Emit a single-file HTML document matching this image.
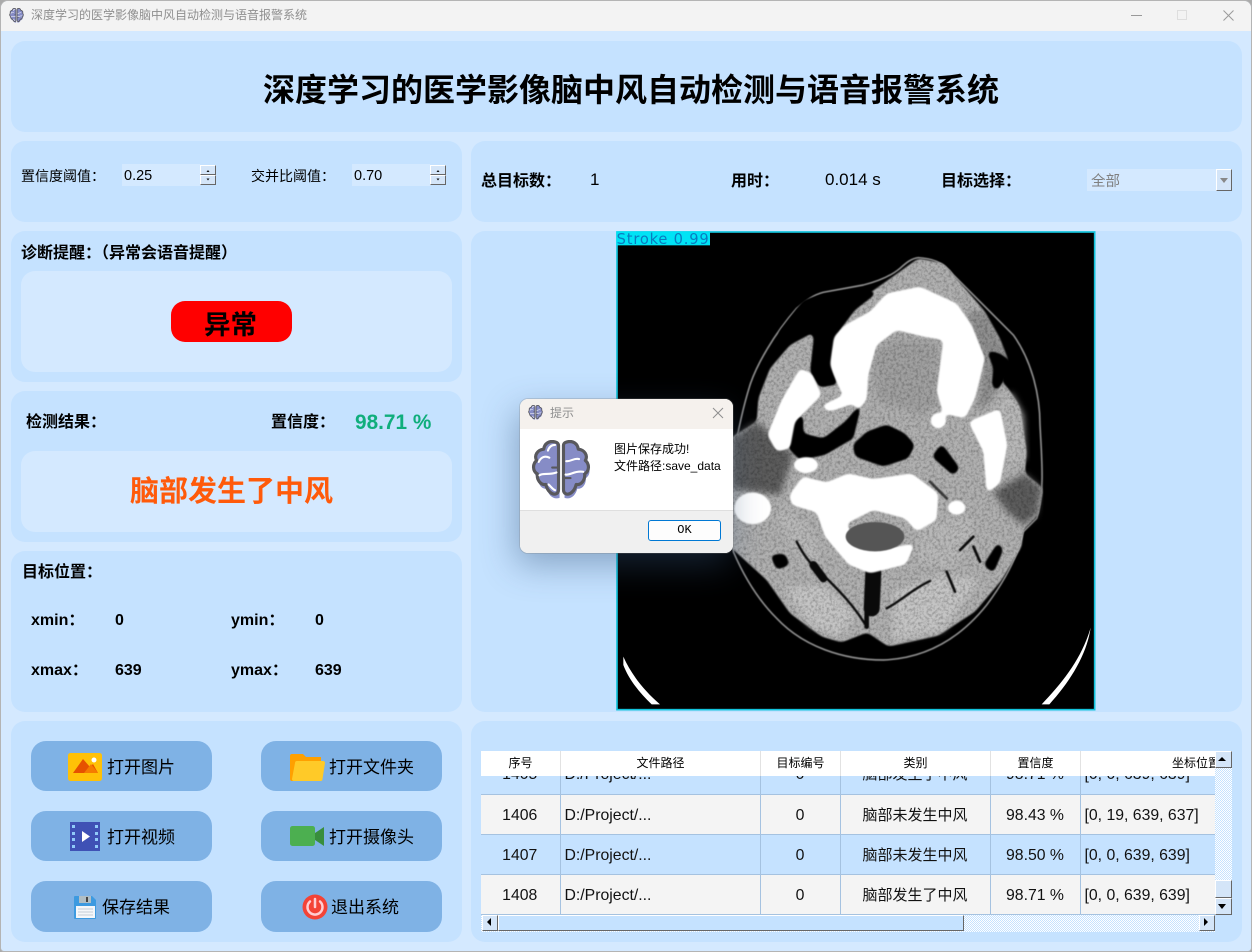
<!DOCTYPE html>
<html lang="zh"><head><meta charset="utf-8"><title>深度学习的医学影像脑中风自动检测与语音报警系统</title>
<style>
*{box-sizing:border-box;margin:0;padding:0}
html,body{width:1252px;height:952px;overflow:hidden;background:#aaa}
body{position:relative;font-family:"Liberation Sans","Noto Sans CJK SC",sans-serif;color:#000}
#win{position:absolute;left:0;top:0;width:1252px;height:952px;background:#d4e9ff;border:1px solid #b4b4b4;border-radius:8px 8px 4px 4px;overflow:hidden}
#bar{position:absolute;left:0;top:0;width:1252px;height:31px;background:#f3f3f3}
.a{position:absolute}
.p{position:absolute;background:#c5e2ff;border-radius:14px}
.i{position:absolute;background:#d4e9ff;border-radius:14px}
.t{position:absolute;white-space:nowrap;line-height:24px;height:24px}
.b{font-weight:700}
.s16{font-size:16px}
.s17{font-size:17px}
.btn{position:absolute;width:181px;background:#7fb2e5;border-radius:15px}
.bt{font-size:17px}
.cl{position:absolute;background:#d4e5f8;border-top:1px solid #fff;border-left:1px solid #fff;border-right:1px solid #666;border-bottom:1px solid #666}
table{border-collapse:collapse;table-layout:fixed;width:830px;position:absolute;left:-1px;top:3px}
td{height:40px;border-right:1px solid #a5c2e0;border-bottom:1px solid #a5c2e0;text-align:center;font-size:15px;color:#111;padding:0;white-space:nowrap;overflow:hidden}
td.l{text-align:left;padding-left:4px}
td.n{font-size:15.8px;padding-top:3px}
tr.g td{background:#f4f4f4}
.h{position:absolute;top:0;height:25px;background:#fff;border-right:1px solid #e2e2e2;text-align:center;font-size:12px;line-height:25px;white-space:nowrap;overflow:hidden}
.dith{background-color:#c5e2ff;background-image:conic-gradient(#fff 25%,#c5e2ff 0 50%,#fff 0 75%,#c5e2ff 0);background-size:2px 2px}
</style></head><body>
<svg width="0" height="0" style="position:absolute"><defs>
<symbol id="brain" viewBox="0 0 170 170">
<g fill="#868cc6"><path d="M70 12C52 6 38 16 36 32 18 34 8 50 16 64 4 74 4 94 18 102 16 120 28 134 42 132 46 150 60 164 78 158V20Z" transform="translate(3 6)"/><path d="M100 12C118 6 132 16 134 32 152 34 162 50 154 64 166 74 166 94 152 102 154 120 142 134 128 132 124 150 110 164 92 158V20Z" transform="translate(3 6)"/></g>
<g fill="#868cc6" stroke="#58585c" stroke-width="9" stroke-linejoin="round"><path d="M70 6C52 0 38 10 36 26 18 28 8 44 16 58 4 68 4 88 18 96 16 114 28 128 42 126 46 144 60 158 72 152 77 150 78 146 78 140V16C78 10 76 8 70 6Z"/><path d="M100 6C118 0 132 10 134 26 152 28 162 44 154 58 166 68 166 88 152 96 154 114 142 128 128 126 124 144 110 158 98 152 93 150 92 146 92 140V16C92 10 94 8 100 6Z"/></g>
<g fill="none" stroke="#fff" stroke-width="6" stroke-linecap="round"><path d="M48 30C52 18 60 14 68 14M22 62C28 48 40 44 52 50M24 100C34 92 50 100 72 92M50 126C58 134 62 140 68 142M100 60C112 62 122 50 136 54M98 98C112 100 124 86 148 90"/></g>
<path d="M60 78H76M95 108H112" stroke="#58585c" stroke-width="6" stroke-linecap="round"/>
</symbol>
<filter id="org" x="-10%" y="-10%" width="120%" height="120%" color-interpolation-filters="sRGB"><feGaussianBlur stdDeviation="9"/><feComponentTransfer><feFuncA type="linear" slope="7" intercept="-3"/></feComponentTransfer><feGaussianBlur stdDeviation="2"/></filter>
<filter id="soft" x="-20%" y="-20%" width="140%" height="140%" color-interpolation-filters="sRGB"><feGaussianBlur stdDeviation="10"/></filter>
<filter id="tiny" x="-5%" y="-5%" width="110%" height="110%" color-interpolation-filters="sRGB"><feGaussianBlur stdDeviation="1.5"/></filter>
<filter id="nz" x="0" y="0" width="100%" height="100%" color-interpolation-filters="sRGB"><feTurbulence type="fractalNoise" baseFrequency="0.12" numOctaves="2" seed="4" result="n"/><feColorMatrix in="n" type="matrix" values="0 0 0 0 0  0 0 0 0 0  0 0 0 0 0  0.55 0 0 0 -0.22" result="d"/><feComposite in="d" in2="SourceAlpha" operator="in" result="c"/><feMerge><feMergeNode in="SourceGraphic"/><feMergeNode in="c"/></feMerge></filter>
</defs></svg>
<div id="win" style="left:0;top:0">
<div style="position:absolute;left:-1px;top:-1px;width:1252px;height:952px">
<div id="bar"></div>
<svg class="a" style="left:9px;top:8px" width="15" height="15"><use href="#brain" width="15" height="15"/></svg>
<div class="t" style="left:31px;top:3px;font-size:12px;color:#8f8f8f">深度学习的医学影像脑中风自动检测与语音报警系统</div>
<svg class="a" style="left:1125px;top:8px" width="115" height="15" fill="none"><path d="M6 7.5H17" stroke="#999" stroke-width="1"/><rect x="52.5" y="2.5" width="9" height="9" stroke="#dedede"/><path d="M98.5 2.5L108.5 12.5M108.5 2.5L98.5 12.5" stroke="#999"/></svg>

<div class="p" style="left:11px;top:41px;width:1231px;height:91px"></div>
<div class="t b" style="left:263px;top:67px;font-size:32px;line-height:46px;height:46px">深度学习的医学影像脑中风自动检测与语音报警系统</div>

<div class="p" style="left:11px;top:141px;width:451px;height:81px"></div>
<div class="t" style="left:21px;top:164px;font-size:14px">置信度阈值：</div>
<div class="a" style="left:122px;top:164px;width:78px;height:22px;background:#d4e9ff"></div>
<div class="t" style="left:124px;top:164px;font-size:14.5px">0.25</div>
<div class="cl" style="left:200px;top:165px;width:16px;height:10px"></div><div class="cl" style="left:200px;top:175px;width:16px;height:10px"></div>
<div class="t" style="left:251px;top:164px;font-size:14px">交并比阈值：</div>
<div class="a" style="left:352px;top:164px;width:78px;height:22px;background:#d4e9ff"></div>
<div class="t" style="left:354px;top:164px;font-size:14.5px">0.70</div>
<div class="cl" style="left:430px;top:165px;width:16px;height:10px"></div><div class="cl" style="left:430px;top:175px;width:16px;height:10px"></div>
<svg class="a" style="left:200px;top:165px" width="250" height="20" fill="#111"><path d="M6.5 7L8 5 9.5 7ZM6.5 13.5L8 15.5 9.5 13.5ZM236.5 7L238 5 239.5 7ZM236.5 13.5L238 15.5 239.5 13.5Z"/></svg>

<div class="p" style="left:471px;top:141px;width:771px;height:81px"></div>
<div class="t b s16" style="left:481px;top:170px">总目标数：</div>
<div class="t s17" style="left:590px;top:168px">1</div>
<div class="t b s16" style="left:731px;top:170px">用时：</div>
<div class="t s17" style="left:825px;top:168px">0.014 s</div>
<div class="t b s16" style="left:941px;top:170px">目标选择：</div>
<div class="a" style="left:1087px;top:169px;width:129px;height:22px;background:#d4e9ff"></div>
<div class="t" style="left:1091px;top:170px;font-size:14.5px;color:#808080">全部</div>
<div class="cl" style="left:1216px;top:169px;width:16px;height:22px"></div>
<svg class="a" style="left:1216px;top:169px" width="16" height="22"><path d="M4 9H12L8 14Z" fill="#888"/></svg>

<div class="p" style="left:11px;top:231px;width:451px;height:151px"></div>
<div class="t b s16" style="left:21px;top:242px">诊断提醒：（异常会语音提醒）</div>
<div class="i" style="left:21px;top:271px;width:431px;height:101px"></div>
<div class="a" style="left:171px;top:301px;width:121px;height:41px;background:#f00;border-radius:14px"></div>
<div class="t b" style="left:204px;top:306px;font-size:26.5px;line-height:38px;height:38px">异常</div>

<div class="p" style="left:11px;top:391px;width:451px;height:151px"></div>
<div class="t b s16" style="left:26px;top:411px">检测结果：</div>
<div class="t b s16" style="left:271px;top:411px">置信度：</div>
<div class="t b" style="left:355px;top:411px;font-size:20.8px;color:#10ae7c">98.71 %</div>
<div class="i" style="left:21px;top:451px;width:431px;height:81px"></div>
<div class="t b" style="left:130px;top:471px;font-size:29px;line-height:42px;height:42px;color:#ff5a0a">脑部发生了中风</div>

<div class="p" style="left:11px;top:551px;width:451px;height:161px"></div>
<div class="t b s16" style="left:22px;top:561px">目标位置：</div>
<div class="t b s16" style="left:31px;top:609px">xmin：</div><div class="t b s16" style="left:115px;top:609px">0</div>
<div class="t b s16" style="left:231px;top:609px">ymin：</div><div class="t b s16" style="left:315px;top:609px">0</div>
<div class="t b s16" style="left:31px;top:659px">xmax：</div><div class="t b s16" style="left:115px;top:659px">639</div>
<div class="t b s16" style="left:231px;top:659px">ymax：</div><div class="t b s16" style="left:315px;top:659px">639</div>

<div class="p" style="left:11px;top:721px;width:451px;height:221px"></div>
<div class="btn" style="left:31px;top:741px;height:50px"></div>
<div class="btn" style="left:261px;top:741px;height:50px"></div>
<div class="btn" style="left:31px;top:811px;height:50px"></div>
<div class="btn" style="left:261px;top:811px;height:50px"></div>
<div class="btn" style="left:31px;top:881px;height:51px"></div>
<div class="btn" style="left:261px;top:881px;height:51px"></div>
<div class="t bt" style="left:107px;top:756px">打开图片</div>
<div class="t bt" style="left:329px;top:756px">打开文件夹</div>
<div class="t bt" style="left:107px;top:826px">打开视频</div>
<div class="t bt" style="left:329px;top:826px">打开摄像头</div>
<div class="t bt" style="left:102px;top:896px">保存结果</div>
<div class="t bt" style="left:331px;top:896px">退出系统</div>
<svg class="a" style="left:0;top:721px" width="462" height="221">
<rect x="68" y="32" width="34" height="28" rx="2.5" fill="#ffc107"/><path d="M73 52L83 38 90 46 93 43 98 52Z" fill="#e65100"/><path d="M84 52L91 43 98 52Z" fill="#f57c00"/><circle cx="94" cy="39" r="2.5" fill="#fff"/>
<path d="M290 35a2 2 0 0 1 2-2h11l3 3h15v22a2 2 0 0 1-2 2h-27a2 2 0 0 1-2-2Z" fill="#ffa000"/><path d="M297 40h26a2 2 0 0 1 2 2l-2.5 16a2 2 0 0 1-2 2H294a2 2 0 0 1-2-2l3-16a2 2 0 0 1 2-2Z" fill="#ffca28"/>
<rect x="70" y="101" width="30" height="29" fill="#3f51b5"/><g fill="#90caf9"><rect x="72" y="104" width="3" height="3"/><rect x="72" y="111" width="3" height="3"/><rect x="72" y="117" width="3" height="3"/><rect x="72" y="124" width="3" height="3"/><rect x="95" y="104" width="3" height="3"/><rect x="95" y="111" width="3" height="3"/><rect x="95" y="117" width="3" height="3"/><rect x="95" y="124" width="3" height="3"/></g><path d="M82 110L90 115.5 82 121Z" fill="#fff"/>
<rect x="290" y="105" width="25" height="20" rx="2.5" fill="#4caf50"/><path d="M315 112L324 106V125L315 119Z" fill="#388e3c"/>
<path d="M74 176a1 1 0 0 1 1-1h17l4 4v18a1 1 0 0 1-1 1H75a1 1 0 0 1-1-1Z" fill="#3d9ae0"/><rect x="79" y="175" width="12" height="7" fill="#b0bec5"/><rect x="86" y="176" width="2" height="5" fill="#444"/><rect x="76" y="185" width="19" height="12" fill="#f5f7fa"/><path d="M78 188H93M78 191H93M78 194H93" stroke="#c5ccd6"/>
<circle cx="315" cy="186" r="12.5" fill="#f44336"/><path d="M310 180.5a7.5 7.5 0 1 0 10 0" fill="none" stroke="#ffcdd2" stroke-width="2.5" stroke-linecap="round"/><path d="M315 178V186" stroke="#ffcdd2" stroke-width="2.5" stroke-linecap="round"/>
</svg>

<div class="p" style="left:471px;top:231px;width:771px;height:481px"></div>
<svg class="a" style="left:610px;top:225px" width="490" height="490" viewBox="0 0 1470 1470">
<rect x="21" y="21" width="1433" height="1433" fill="#000" stroke="#12c4dc" stroke-width="5"/>
<path d="M40 1295C62 1345 100 1395 150 1438H125C85 1400 55 1360 40 1320ZM1442 1208C1430 1290 1380 1370 1318 1438H1295C1360 1370 1415 1300 1442 1208Z" fill="#fff"/>
<path d="M925 98C960 100 1000 108 1030 150 1080 200 1150 270 1210 330 1260 400 1290 500 1290 600 1295 700 1305 800 1280 880L1240 920C1225 990 1190 1060 1130 1140 1050 1240 950 1300 820 1305 700 1305 580 1265 500 1180 440 1120 400 1050 370 980L370 700C380 640 395 560 420 480 440 420 490 330 560 250 590 225 610 210 640 202L760 180C800 170 840 155 870 130 890 112 905 100 925 98Z" fill="none" stroke="#8c8c8c" stroke-width="5" filter="url(#tiny)"/>
<g filter="url(#nz)">
<g filter="url(#org)">
<path d="M870 140L925 100 1000 115 1060 185 1125 260 1170 340 1195 405 1175 470 1195 490 1230 545 1250 680 1245 745 1300 790 1285 870 1240 915 1235 965 1175 1065 1095 1160 985 1232 835 1265 772 1222 695 1252 635 1235 540 1165 470 1065 360 965 360 640 440 590 445 520 480 430 540 360 605 325 660 300 750 225Z" fill="#b0b0b0"/>
<path d="M1070 260L1125 260 1170 350 1195 405 1165 470 1150 520 1100 560 1120 440Z" fill="#8f8f8f"/>
</g>
<path d="M1150 800L1245 745 1295 790 1280 870 1240 900 1190 860ZM365 640L440 590 550 690 510 810 365 790Z" fill="#5c5c5c" filter="url(#soft)"/>
<path d="M1165 520L1205 505 1240 570 1245 700 1190 740Z" fill="#b8b8b8" filter="url(#soft)"/>
<path d="M790 380L860 340 985 350 985 530 940 570 800 530Z" fill="#a0a0a0" filter="url(#soft)"/>
<path d="M500 880L530 850 590 900 640 1000 580 1010ZM930 900L1080 870 1100 950 1020 1030 920 1010Z" fill="#b8b8b8" filter="url(#soft)"/>
<path d="M520 1090L640 1080 740 1170 690 1235 600 1200ZM850 1100L1000 1050 1110 1060 1000 1215 850 1245Z" fill="#c4c4c4" filter="url(#soft)"/>
</g>
<g filter="url(#org)" fill="#000">
<path d="M580 225L640 208 770 190 800 205 735 255 690 315 668 380 668 440 685 478 628 488 600 440 612 330 560 320 530 345 500 330Z"/>
<path d="M757 530L730 640 645 690 570 705 535 670 545 590 580 565 580 625 640 640 705 590Z"/>
<path d="M728 660L770 620 830 598 885 625 915 660 895 700 820 725 735 695Z"/>
<path d="M965 695L995 655 1050 730 1030 752Z"/>
<path d="M1130 375L1170 385 1205 410 1180 470 1160 500 1145 480 1150 430Z"/>
<path d="M1120 1020L1165 950 1180 975 1150 1045Z"/>
<path d="M480 990L525 985 540 1020 500 1035Z"/>
</g>
<g fill="none" stroke="#0a0a0a" stroke-linecap="round" stroke-linejoin="round" filter="url(#tiny)">
<path d="M560 950C580 990 610 1030 650 1060 690 1100 730 1140 770 1205" stroke-width="7"/>
<path d="M790 1040L785 1150" stroke-width="48"/>
<path d="M770 1120L770 1205" stroke-width="14"/>
<path d="M830 1150C870 1130 910 1090 960 1068" stroke-width="7"/>
<path d="M610 1020L640 1060" stroke-width="24"/>
<path d="M1090 935L1050 975M1090 965L1110 1010M1010 1040L1035 1100" stroke-width="8"/>
<path d="M960 770L1010 820" stroke-width="8" opacity=".7"/>
</g>
<g fill="#fff" filter="url(#org)">
<path d="M672 335L705 300 780 260 830 205 930 185 1040 235 1085 300 1125 400 1095 520 1065 580 1000 565 980 500 1000 345 940 335 860 315 800 360 775 450 770 525 745 555 690 495 660 420Z"/>
<path d="M570 430L605 445 635 510 555 590 540 670 500 680 472 630 515 525Z"/>
<path d="M1075 590L1170 550 1192 660 1170 775 1130 805 1120 680Z"/>
<path d="M538 810L578 755 650 772 715 745 790 762 905 745 985 805 980 885 920 920 885 880 790 855 710 895 735 955 790 978 915 955 888 1018 780 1045 715 1018 645 935 620 862 545 840Z"/>
<ellipse cx="428" cy="850" rx="56" ry="48"/><ellipse cx="588" cy="720" rx="38" ry="24"/><ellipse cx="985" cy="587" rx="24" ry="24"/><path d="M630 545L730 495 760 525 660 560Z"/><ellipse cx="1040" cy="848" rx="28" ry="22"/>
</g>
<ellipse cx="795" cy="935" rx="88" ry="44" fill="#555" filter="url(#tiny)"/>
<rect x="19" y="19" width="281" height="42" fill="#00e3f5"/>
<text x="20" y="57" font-family="DejaVu Sans,sans-serif" font-size="44" fill="#0a7cc0" textLength="276">Stroke 0.99</text>
</svg>

<div class="p" style="left:471px;top:721px;width:771px;height:221px"></div>
<div class="a" style="left:481px;top:751px;width:734px;height:164px;overflow:hidden">
<table><colgroup><col style="width:80px"><col style="width:200px"><col style="width:80px"><col style="width:150px"><col style="width:90px"><col style="width:230px"></colgroup>
<tr><td class="n">1405</td><td class="l n">D:/Project/...</td><td class="n">0</td><td>脑部发生了中风</td><td class="n">98.71 %</td><td class="l n">[0, 0, 639, 639]</td></tr>
<tr class="g"><td class="n">1406</td><td class="l n">D:/Project/...</td><td class="n">0</td><td>脑部未发生中风</td><td class="n">98.43 %</td><td class="l n">[0, 19, 639, 637]</td></tr>
<tr><td class="n">1407</td><td class="l n">D:/Project/...</td><td class="n">0</td><td>脑部未发生中风</td><td class="n">98.50 %</td><td class="l n">[0, 0, 639, 639]</td></tr>
<tr class="g"><td class="n">1408</td><td class="l n">D:/Project/...</td><td class="n">0</td><td>脑部发生了中风</td><td class="n">98.71 %</td><td class="l n">[0, 0, 639, 639]</td></tr>
</table>
<div class="h" style="left:0;width:80px">序号</div><div class="h" style="left:80px;width:200px">文件路径</div><div class="h" style="left:280px;width:80px">目标编号</div><div class="h" style="left:360px;width:150px">类别</div><div class="h" style="left:510px;width:90px">置信度</div><div class="h" style="left:600px;width:230px;border-right:0">坐标位置</div>
</div>
<div class="a dith" style="left:1215px;top:751px;width:17px;height:164px"></div>
<div class="cl" style="left:1215px;top:751px;width:17px;height:17px"></div>
<div class="cl" style="left:1215px;top:880px;width:17px;height:18px"></div>
<div class="cl" style="left:1215px;top:898px;width:17px;height:17px"></div>
<div class="a dith" style="left:481px;top:915px;width:734px;height:17px"></div>
<div class="cl" style="left:482px;top:915px;width:16px;height:16px"></div>
<div class="cl" style="left:498px;top:915px;width:466px;height:16px;background:#c5e2ff"></div>
<div class="cl" style="left:1199px;top:915px;width:16px;height:16px"></div>
<svg class="a" style="left:481px;top:751px" width="752" height="182" fill="#000"><path d="M737 10H745L741 6ZM737 153H745L741 158ZM10 167V175L6 171ZM723 167V175L727 171Z"/></svg>

<div class="a" style="left:520px;top:399px;width:213px;height:154px;background:#fff;border-radius:8px;overflow:hidden;outline:1px solid rgba(120,120,120,.25);box-shadow:-4px 12px 34px rgba(50,80,120,.42)">
<div class="a" style="left:0;top:0;width:213px;height:30px;background:#f5f1ed"></div>
<div class="a" style="left:0;top:111px;width:213px;height:43px;background:#f0f0f0;border-top:1px solid #dfdfdf"></div>
<svg class="a" style="left:8px;top:6px" width="15" height="15"><use href="#brain" width="15" height="15"/></svg>
<div class="t" style="left:30px;top:2px;font-size:12px;color:#8f8f8f">提示</div>
<svg class="a" style="left:192px;top:8px" width="12" height="12" fill="none"><path d="M1 1L11 11M11 1L1 11" stroke="#8f8f8f"/></svg>
<svg class="a" style="left:11px;top:41px" width="60" height="60"><use href="#brain" width="60" height="60"/></svg>
<div class="t" style="left:94px;top:38px;font-size:12px;line-height:24px">图片保存成功!</div>
<div class="t" style="left:94px;top:55px;font-size:12px;line-height:24px">文件路径:save_data</div>
<div class="a" style="left:128px;top:121px;width:73px;height:21px;background:#fdfdfd;border:1px solid #0078d4;border-radius:3px;text-align:center;font:12px/19px 'Liberation Mono',monospace">OK</div>
</div>
</div></div>
</body></html>
